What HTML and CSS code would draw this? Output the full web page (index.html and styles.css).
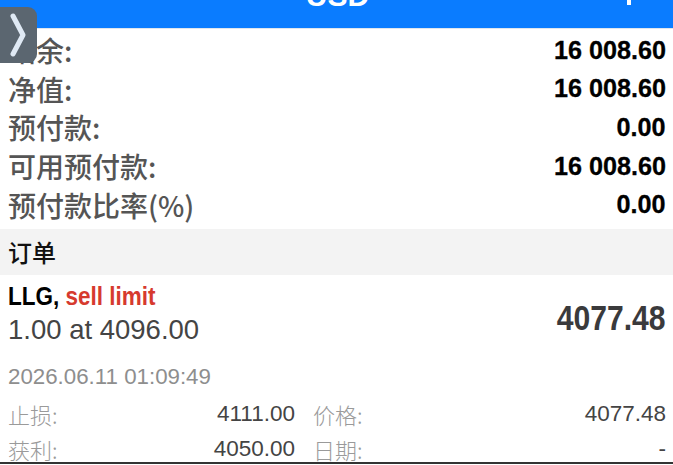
FILE: index.html
```html
<!DOCTYPE html>
<html lang="zh">
<head>
    <meta charset="UTF-8">
    <meta name="viewport" content="width=device-width, initial-scale=1.0">
    <title>交易 - USD</title>
    <link rel="stylesheet" href="styles.css">
</head>
<body>
    <div class="screen">
        <div class="topbar">
            <span class="title">USD</span>
            <span class="plus"></span>
        </div>

        <div class="side-tab">
            <svg width="16" height="44" viewBox="0 0 16 44">
                <path d="M3 3 L13 22 L3 41" fill="none" stroke="#dfe9f4" stroke-width="5" stroke-linecap="round" stroke-linejoin="round"/>
            </svg>
        </div>

        <div class="summary">
            <div class="row"><span class="label">结余:</span><span class="value">16 008.60</span></div>
            <div class="row"><span class="label">净值:</span><span class="value">16 008.60</span></div>
            <div class="row"><span class="label">预付款:</span><span class="value">0.00</span></div>
            <div class="row"><span class="label">可用预付款:</span><span class="value">16 008.60</span></div>
            <div class="row"><span class="label">预付款比率(%)</span><span class="value">0.00</span></div>
        </div>

        <div class="section">订单</div>

        <div class="order">
            <div class="order-main">
                <div class="order-left">
                    <div class="symbol">LLG, <span class="type">sell limit</span></div>
                    <div class="volume">1.00 at 4096.00</div>
                </div>
                <div class="price">4077.48</div>
            </div>
            <div class="date">2026.06.11 01:09:49</div>
            <div class="details">
                <span class="d-label">止损:</span><span class="d-value">4111.00</span>
                <span class="d-label second">价格:</span><span class="d-value">4077.48</span>
                <span class="d-label">获利:</span><span class="d-value">4050.00</span>
                <span class="d-label second">日期:</span><span class="d-value">-</span>
            </div>
        </div>
        <div class="bottom-line"></div>
    </div>
</body>
</html>
```

FILE: styles.css
```css
body {
    margin: 0;
    padding: 0;
    background: #ffffff;
    font-family: "Liberation Sans", "Noto Sans CJK SC", sans-serif;
}
.screen {
    position: relative;
    width: 673px;
    height: 465px;
    overflow: hidden;
    background: #ffffff;
}
.topbar {
    position: relative;
    height: 28px;
    background: #0a7cff;
    overflow: hidden;
    border-bottom: 1px solid #dfe6ee;
}
.title {
    display: block;
    text-align: center;
    color: #ffffff;
    font-weight: bold;
    font-size: 30px;
    line-height: 30px;
    margin-top: -19px;
    padding-left: 2px;
}
.plus {
    position: absolute;
    left: 627px;
    top: -10px;
    width: 4px;
    height: 15px;
    background: #ffffff;
}
.side-tab {
    position: absolute;
    left: 0;
    top: 7px;
    width: 37px;
    height: 56px;
    background: #5b6670;
    border-radius: 0 9px 9px 0;
    display: flex;
    align-items: center;
    padding-left: 10px;
    box-sizing: border-box;
}
.summary {
    padding: 2px 7px 0 8px;
}
.row {
    display: flex;
    justify-content: space-between;
    align-items: center;
    height: 38.6px;
}
.label {
    font-family: "Noto Sans CJK SC", sans-serif;
    font-weight: 500;
    font-size: 28px;
    line-height: 34px;
    color: #555555;
}
.value {
    display: inline-block;
    font-weight: bold;
    font-size: 26.5px;
    color: #000000;
    -webkit-text-stroke: 0.3px #000000;
    transform: scaleX(0.95);
    transform-origin: right center;
}
.section {
    margin-top: 5px;
    height: 46px;
    line-height: 46px;
    background: #f3f3f3;
    padding-left: 8px;
    font-family: "Noto Sans CJK SC", sans-serif;
    font-weight: 500;
    font-size: 24px;
    color: #111111;
}
.order {
    padding: 0 7px 0 8px;
}
.order-main {
    display: flex;
    justify-content: space-between;
    align-items: center;
    padding-top: 7px;
}
.symbol {
    font-weight: bold;
    font-size: 25px;
    line-height: 28px;
    color: #000000;
    transform: scaleX(0.9);
    transform-origin: left center;
}
.type {
    color: #d63a2e;
}
.volume {
    font-size: 27.5px;
    line-height: 40px;
    color: #444444;
}
.price {
    font-weight: bold;
    font-size: 35px;
    color: #3a3a3c;
    padding-top: 4px;
    transform: scaleX(0.86);
    transform-origin: right center;
}
.date {
    margin-top: 14px;
    font-size: 22.3px;
    line-height: 26px;
    color: #8e8e8e;
}
.details {
    display: grid;
    grid-template-columns: 90px 197px 118px 1fr;
    margin-top: 11px;
    row-gap: 9px;
    font-size: 22.5px;
    line-height: 26px;
}
.d-label {
    font-family: "Noto Sans CJK SC", sans-serif;
    font-weight: 300;
    font-size: 22px;
    color: #9a9a9a;
}
.d-label.second {
    padding-left: 18px;
}
.d-value {
    text-align: right;
    color: #444444;
}
.bottom-line {
    position: absolute;
    left: 0;
    right: 0;
    top: 462px;
    height: 2px;
    background: #333333;
}
```
